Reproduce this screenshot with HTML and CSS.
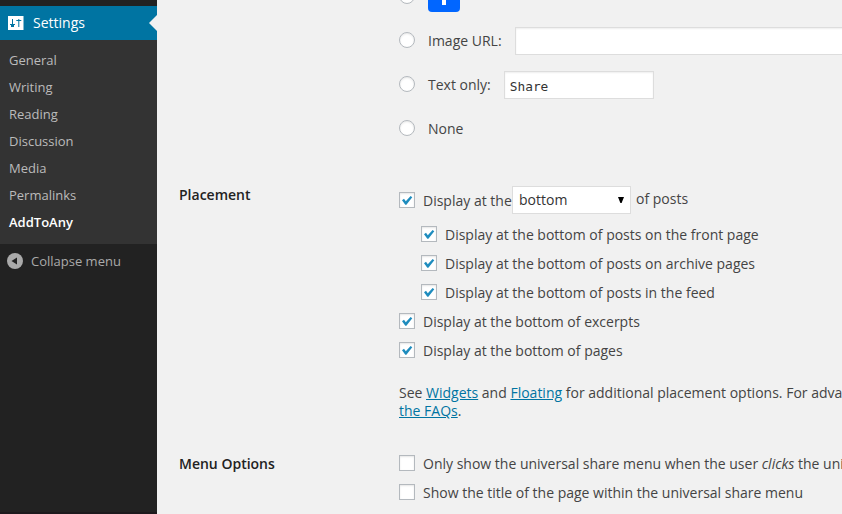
FILE: index.html
```html
<!DOCTYPE html>
<html lang="en">
<head>
<meta charset="utf-8">
<title>AddToAny Settings</title>
<link rel="stylesheet" href="styles.css">
</head>
<body>
<svg class="defs" width="0" height="0"><symbol id="check" viewBox="0 0 16 16"><path fill="#1e8cbe" d="M3 8.2 5 6.8 6.8 9.2 11.6 3.9 13.3 5.3 7.4 12.7 6.3 12.7Z"/></symbol></svg>
<div class="admin">
  <nav class="sidebar">
    <div class="current">
      <svg width="16" height="14" viewBox="0 0 16 14"><path fill="#fff" d="M0 0h15.5v14H0z"/><path fill="#0074a2" d="M4 3h1v5h2v1H6v2H3V9H2V8h2zM10.300 3h1v1h2v1h-2v6h-1V5h-2V4h2z"/></svg>
      <span>Settings</span>
    </div>
    <ul class="submenu">
      <li>General</li><li>Writing</li><li>Reading</li><li>Discussion</li><li>Media</li><li>Permalinks</li><li class="active">AddToAny</li>
    </ul>
    <div class="collapse">
      <svg width="16" height="16" viewBox="0 0 16 16"><circle cx="8" cy="8" r="8" fill="#aaa"/><path fill="#222" d="M4.5 8 10 4.500v7z"/></svg>
      <span>Collapse menu</span>
    </div>
    <div class="edge"></div>
  </nav>
  <main class="form">
    <section class="group icons">
      <h2></h2>
      <div>
        <div class="choice first"><i class="radio"></i><svg class="share" width="32" height="32" viewBox="0 0 32 32"><rect width="32" height="32" rx="4" fill="#0166ff"/><path fill="#fff" d="M14 5h4v7h7v4h-7v9h-4v-9H7v-4h7z"/></svg></div>
        <div class="choice"><i class="radio"></i><span>Image URL:</span><div class="field url"></div></div>
        <div class="choice"><i class="radio"></i><span>Text only:</span><div class="field label">Share</div></div>
        <div class="choice"><i class="radio"></i><span>None</span></div>
      </div>
    </section>
    <section class="group placement">
      <h2>Placement</h2>
      <div>
        <div class="position"><i class="box"><svg width="16" height="16"><use href="#check"/></svg></i><span class="lead">Display at the</span><div class="select"><span>bottom</span><svg width="6" height="8" viewBox="0 0 6 8"><path d="M0 1h6L3.600 7H2.400z"/></svg></div><span class="tail">of posts</span></div>
        <div class="option nested"><i class="box"><svg width="16" height="16"><use href="#check"/></svg></i><span>Display at the bottom of posts on the front page</span></div>
        <div class="option nested"><i class="box"><svg width="16" height="16"><use href="#check"/></svg></i><span>Display at the bottom of posts on archive pages</span></div>
        <div class="option nested"><i class="box"><svg width="16" height="16"><use href="#check"/></svg></i><span>Display at the bottom of posts in the feed</span></div>
        <div class="option"><i class="box"><svg width="16" height="16"><use href="#check"/></svg></i><span>Display at the bottom of excerpts</span></div>
        <div class="option"><i class="box"><svg width="16" height="16"><use href="#check"/></svg></i><span>Display at the bottom of pages</span></div>
        <p>See <a>Widgets</a> and <a>Floating</a> for additional placement options. For adva<br><a>the FAQs</a>.</p>
      </div>
    </section>
    <section class="group menu">
      <h2>Menu Options</h2>
      <div>
        <div class="option"><i class="box"></i><span>Only show the universal share menu when the user <em>clicks</em> the uni</span></div>
        <div class="option"><i class="box"></i><span>Show the title of the page within the universal share menu</span></div>
      </div>
    </section>
  </main>
</div>
</body>
</html>
```
FILE: styles.css
```css
* { box-sizing: border-box; }
body {
  margin: 0;
  overflow: hidden;
  background: #f1f1f1;
  color: #444;
  font: 14px/18px "Open Sans", sans-serif;
}
.defs { position: absolute; }
svg { display: block; flex: none; }
.admin { display: flex; height: 514px; overflow: hidden; }

.sidebar {
  display: flex;
  flex-direction: column;
  flex: none;
  width: 157px;
  padding-top: 6px;
  background: #222;
}
.current {
  position: relative;
  display: flex;
  align-items: center;
  gap: 9px;
  height: 34px;
  padding-left: 8px;
  background: #0074a2;
  color: #fff;
}
.current::after {
  content: "";
  position: absolute;
  right: 0;
  top: 9px;
  border: 8px solid transparent;
  border-right-color: #f1f1f1;
  border-left: 0;
}
.submenu {
  margin: 0;
  padding: 7px 9px 8px;
  height: 204px;
  list-style: none;
  background: #333;
  color: #bbb;
  font-size: 13px;
}
.submenu li { height: 27px; line-height: 27px; }
.submenu .active { color: #fff; font-weight: 600; }
.collapse {
  display: flex;
  align-items: center;
  gap: 8px;
  height: 34px;
  padding-left: 7px;
  color: #aaa;
  font-size: 13px;
}
.edge { height: 2px; margin-top: auto; background: #1d191d; }

.form { flex: 1; min-width: 0; padding-left: 22px; }
.group {
  display: grid;
  grid-template-columns: 220px 600px;
  white-space: nowrap;
}
h2 { margin: 0; color: #222; font-size: 14px; line-height: 18px; font-weight: 600; }
.icons { height: 186px; }
.choice { display: flex; align-items: flex-start; height: 44px; padding-top: 8px; }
.choice .radio { margin-top: 5px; }
.choice > span { margin: 5px 0 0 13px; }
.choice.first { height: 19px; padding: 0; align-items: flex-end; }
.first .radio { margin: 0 0 15px; }
.share { margin: 0 0 7px 13px; }
.radio {
  flex: none;
  width: 16px;
  height: 16px;
  border: 1px solid #b4b9be;
  border-radius: 50%;
  background: #fff;
  box-shadow: inset 0 1px 2px rgba(0, 0, 0, .1);
}
.field {
  height: 28px;
  margin-left: 13px;
  border: 1px solid #ddd;
  background: #fff;
  box-shadow: inset 0 1px 2px rgba(0, 0, 0, .07);
}
.url { width: 400px; }
.label {
  width: 150px;
  padding: 2px 5px 0;
  color: #333;
  font: 12.8px/26px "DejaVu Sans Mono", monospace;
}

.placement { height: 269px; }
.position { display: flex; height: 33px; }
.position .box { margin-top: 6px; }
.lead { width: 98px; padding: 6px 0 0 8px; }
.select {
  display: flex;
  justify-content: space-between;
  align-items: center;
  width: 119px;
  height: 28px;
  margin-left: -1px;
  padding: 0 6px;
  border: 1px solid #ddd;
  background: #fff;
  color: #333;
}
.tail { padding: 4px 0 0 5px; }
.option { display: flex; align-items: center; height: 29px; }
.nested { padding-left: 22px; }
.option span { margin-left: 8px; padding-top: 2px; }
.box {
  flex: none;
  width: 16px;
  height: 16px;
  border: 1px solid #b4b9be;
  background: #fff;
  box-shadow: inset 0 1px 2px rgba(0, 0, 0, .1);
}
.box svg { margin: -1px; }
p { margin: 20px 0 0; }
a { color: #0074a2; text-decoration: underline; }
.menu > div { margin-top: -7px; }
```
